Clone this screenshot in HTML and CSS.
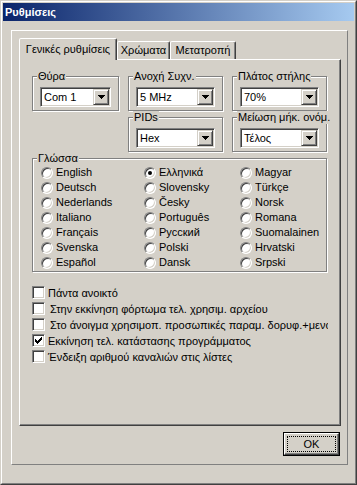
FILE: index.html
```html
<!DOCTYPE html>
<html lang="el">
<head>
<meta charset="utf-8">
<title>Ρυθμίσεις</title>
<link rel="stylesheet" href="styles.css">
</head>
<body>
<div class="window">
  <div class="frame">
    <div class="titlebar">Ρυθμίσεις</div>
    <div class="dialog">
      <div class="tabs">
        <div class="tab tab-active">Γενικές ρυθμίσεις</div>
        <div class="tab tab-colors">Χρώματα</div>
        <div class="tab tab-convert">Μετατροπή</div>
      </div>
      <div class="tabpage">
        <div class="top-grid">
          <fieldset class="group">
            <legend>Θύρα</legend>
            <div class="group-body">
              <div class="combo"><span class="combo-text">Com 1</span><span class="combo-btn"><svg width="7" height="4" viewBox="0 0 7 4"><path d="M0 0h7v1H0zM1 1h5v1H1zM2 2h3v1H2zM3 3h1v1H3z"/></svg></span></div>
            </div>
          </fieldset>
          <fieldset class="group">
            <legend>Ανοχή Συχν.</legend>
            <div class="group-body">
              <div class="combo"><span class="combo-text">5 MHz</span><span class="combo-btn"><svg width="7" height="4" viewBox="0 0 7 4"><path d="M0 0h7v1H0zM1 1h5v1H1zM2 2h3v1H2zM3 3h1v1H3z"/></svg></span></div>
            </div>
          </fieldset>
          <fieldset class="group">
            <legend>Πλάτος στήλης</legend>
            <div class="group-body">
              <div class="combo"><span class="combo-text">70%</span><span class="combo-btn"><svg width="7" height="4" viewBox="0 0 7 4"><path d="M0 0h7v1H0zM1 1h5v1H1zM2 2h3v1H2zM3 3h1v1H3z"/></svg></span></div>
            </div>
          </fieldset>
          <fieldset class="group col-2">
            <legend>PIDs</legend>
            <div class="group-body">
              <div class="combo"><span class="combo-text">Hex</span><span class="combo-btn"><svg width="7" height="4" viewBox="0 0 7 4"><path d="M0 0h7v1H0zM1 1h5v1H1zM2 2h3v1H2zM3 3h1v1H3z"/></svg></span></div>
            </div>
          </fieldset>
          <fieldset class="group">
            <legend>Μείωση μήκ. ονόμ.</legend>
            <div class="group-body">
              <div class="combo"><span class="combo-text">Τέλος</span><span class="combo-btn"><svg width="7" height="4" viewBox="0 0 7 4"><path d="M0 0h7v1H0zM1 1h5v1H1zM2 2h3v1H2zM3 3h1v1H3z"/></svg></span></div>
            </div>
          </fieldset>
          <fieldset class="group span-all">
            <legend>Γλώσσα</legend>
            <div class="lang-grid">
              <div class="radio-item"><span class="radio"></span>English</div>
              <div class="radio-item"><span class="radio"></span>Deutsch</div>
              <div class="radio-item"><span class="radio"></span>Nederlands</div>
              <div class="radio-item"><span class="radio"></span>Italiano</div>
              <div class="radio-item"><span class="radio"></span>Français</div>
              <div class="radio-item"><span class="radio"></span>Svenska</div>
              <div class="radio-item"><span class="radio"></span>Español</div>
              <div class="radio-item"><span class="radio radio-on"></span>Ελληνικά</div>
              <div class="radio-item"><span class="radio"></span>Slovensky</div>
              <div class="radio-item"><span class="radio"></span>Česky</div>
              <div class="radio-item"><span class="radio"></span>Português</div>
              <div class="radio-item"><span class="radio"></span>Русский</div>
              <div class="radio-item"><span class="radio"></span>Polski</div>
              <div class="radio-item"><span class="radio"></span>Dansk</div>
              <div class="radio-item"><span class="radio"></span>Magyar</div>
              <div class="radio-item"><span class="radio"></span>Türkçe</div>
              <div class="radio-item"><span class="radio"></span>Norsk</div>
              <div class="radio-item"><span class="radio"></span>Romana</div>
              <div class="radio-item"><span class="radio"></span>Suomalainen</div>
              <div class="radio-item"><span class="radio"></span>Hrvatski</div>
              <div class="radio-item"><span class="radio"></span>Srpski</div>
            </div>
          </fieldset>
        </div>
        <div class="checks">
          <div class="check-row"><span class="check"></span><span>Πάντα ανοικτό</span></div>
          <div class="check-row"><span class="check"></span><span class="indent">Στην εκκίνηση φόρτωμα τελ. χρησιμ. αρχείου</span></div>
          <div class="check-row"><span class="check"></span><span class="indent">Στο άνοιγμα χρησιμοπ. προσωπικές παραμ. δορυφ.+μενού</span></div>
          <div class="check-row"><span class="check"><svg width="11" height="11" viewBox="0 0 11 11"><path d="M2 4h1v3H2zM3 5h1v3H3zM4 6h1v3H4zM5 5h1v3H5zM6 4h1v3H6zM7 3h1v3H7zM8 2h1v3H8z"/></svg></span><span>Εκκίνηση τελ. κατάστασης προγράμματος</span></div>
          <div class="check-row"><span class="check"></span><span>Ένδειξη αριθμού καναλιών στις λίστες</span></div>
        </div>
      </div>
      <div class="buttons">
        <div class="btn-default"><div class="btn-bevel"><div class="btn-focus">OK</div></div></div>
      </div>
    </div>
  </div>
</div>
</body>
</html>
```
FILE: styles.css
```css
html, body {
  margin: 0;
  padding: 0;
  background: #d4d0c8;
}
body {
  font-family: "Liberation Sans", Arial, sans-serif;
  font-size: 11px;
  color: #000;
}
.window {
  width: 357px;
  height: 485px;
  box-sizing: border-box;
  border: 1px solid;
  border-color: #d4d0c8 #404040 #404040 #d4d0c8;
}
.frame {
  height: 100%;
  box-sizing: border-box;
  border: 1px solid;
  border-color: #fff #808080 #808080 #fff;
  padding: 1px;
}
.titlebar {
  height: 18px;
  line-height: 18px;
  padding-left: 2px;
  background: linear-gradient(90deg, #0a246a, #a6caf0);
  color: #fff;
  font-weight: bold;
}
.dialog {
  margin: 9px 6px 0 8px;
  height: 435px;
  box-sizing: border-box;
  border: 1px solid;
  border-color: #fff #808080 #808080 #fff;
  padding: 7px 6px 0 7px;
}
.tabs {
  display: flex;
  height: 21px;
}
.tab {
  box-sizing: border-box;
  height: 18px;
  margin-top: 3px;
  border: 1px solid;
  border-bottom: none;
  border-color: #fff #404040 transparent #fff;
  border-radius: 2px 2px 0 0;
  box-shadow: inset -1px 0 #808080;
  padding-top: 2px;
  line-height: 13px;
  text-align: center;
  background: #d4d0c8;
  white-space: nowrap;
}
.tab-active {
  width: 98px;
  height: 22px;
  margin-top: 0;
  margin-bottom: -1px;
  padding-top: 4px;
  position: relative;
  z-index: 1;
}
.tab-colors { width: 53px; }
.tab-convert { width: 66px; }
.tabpage {
  box-sizing: border-box;
  width: 322px;
  height: 367px;
  border: 1px solid;
  border-color: #fff #404040 #404040 #fff;
  box-shadow: inset -1px -1px #808080;
  padding: 10px 0 0 12px;
}
.top-grid {
  display: grid;
  grid-template-columns: 87px 95px 95px;
  column-gap: 9px;
}
.col-2 { grid-column: 2; }
.span-all { grid-column: 1 / -1; }
.group {
  margin: 0;
  padding: 0;
  min-width: 0;
  border: 1px solid #808080;
  box-shadow: 1px 1px 0 #fff, inset 1px 1px 0 #fff;
}
.group legend {
  margin-left: 4px;
  padding: 0 1px;
  line-height: 13px;
  background: #d4d0c8;
  white-space: nowrap;
}
.group-body {
  padding: 4px 0 3px;
}
.combo {
  display: flex;
  height: 20px;
  box-sizing: border-box;
  margin: 0 7px;
  padding: 1px;
  border: 1px solid;
  border-color: #808080 #fff #fff #808080;
  box-shadow: inset 1px 1px #404040, inset -1px -1px #d4d0c8;
  background: #fff;
}
.combo-text {
  flex: 1;
  padding-left: 2px;
  line-height: 16px;
  white-space: nowrap;
  overflow: hidden;
}
.combo-btn {
  flex: none;
  width: 16px;
  height: 16px;
  box-sizing: border-box;
  border: 1px solid;
  border-color: #d4d0c8 #404040 #404040 #d4d0c8;
  box-shadow: inset 1px 1px #fff, inset -1px -1px #808080;
  background: #d4d0c8;
  display: flex;
  align-items: center;
  justify-content: center;
}
.combo-btn svg { display: block; }
.lang-grid {
  display: grid;
  grid-template-columns: 103px 96px 1fr;
  grid-template-rows: repeat(7, 15px);
  grid-auto-flow: column;
  padding: 0 0 1px 8px;
}
.radio-item {
  display: flex;
  align-items: center;
  gap: 3px;
  line-height: 15px;
  white-space: nowrap;
}
.radio {
  flex: none;
  width: 12px;
  height: 12px;
  box-sizing: border-box;
  border-radius: 50%;
  border: 1px solid;
  border-color: #808080 #fff #fff #808080;
  box-shadow: inset 1px 1px #404040, inset -1px -1px #d4d0c8;
  background: #fff;
  display: flex;
  align-items: center;
  justify-content: center;
}
.radio-on::after {
  content: "";
  width: 4px;
  height: 4px;
  border-radius: 50%;
  background: #000;
}
.checks {
  margin-top: 13px;
  width: 296px;
  overflow: hidden;
}
.check-row {
  display: flex;
  align-items: flex-start;
  height: 16px;
  line-height: 16px;
  white-space: nowrap;
}
.check {
  flex: none;
  width: 13px;
  height: 13px;
  margin: 1px 3px 0 0;
  box-sizing: border-box;
  border: 1px solid;
  border-color: #808080 #fff #fff #808080;
  box-shadow: inset 1px 1px #404040, inset -1px -1px #d4d0c8;
  background: #fff;
}
.check svg { display: block; }
.indent { padding-left: 2px; }
.buttons {
  display: flex;
  justify-content: flex-end;
  margin-top: 6px;
  padding-right: 1px;
}
.btn-default {
  width: 57px;
  height: 24px;
  box-sizing: border-box;
  border: 1px solid #000;
}
.btn-bevel {
  height: 100%;
  box-sizing: border-box;
  border: 1px solid;
  border-color: #fff #404040 #404040 #fff;
  box-shadow: inset -1px -1px #808080;
  padding: 2px;
}
.btn-focus {
  height: 100%;
  box-sizing: border-box;
  border: 1px dotted #000;
  display: flex;
  align-items: center;
  justify-content: center;
}
```
